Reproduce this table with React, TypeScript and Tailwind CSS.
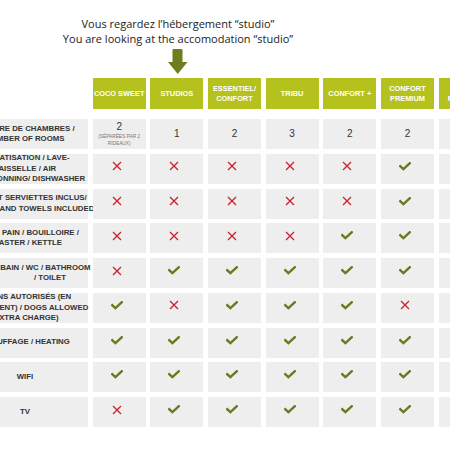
import React from "react";

const Check = () => (
  <svg width="12" height="9" viewBox="0 0 12 9" fill="none">
    <path d="M1.2 4.2 L4.4 7.2 L10.8 1.2" stroke="#6b7a21" strokeWidth="2.4" strokeLinecap="square" />
  </svg>
);

const Cross = () => (
  <svg width="10" height="10" viewBox="0 0 10 10" fill="none">
    <path d="M1 1 L9 9 M9 1 L1 9" stroke="#c8232c" strokeWidth="1.3" />
  </svg>
);

const headers: string[][] = [
  ["COCO SWEET"],
  ["STUDIOS"],
  ["ESSENTIEL/", "CONFORT"],
  ["TRIBU"],
  ["CONFORT +"],
  ["CONFORT", "PREMIUM"],
  ["SUITE", "PREMIUM"],
];

type Row = { label: string[]; cells: (string | boolean)[] };

const rows: Row[] = [
  { label: ["NOMBRE DE CHAMBRES /", "NUMBER OF ROOMS"], cells: ["2*", "1", "2", "3", "2", "2", "2"] },
  { label: ["CLIMATISATION / LAVE-", "VAISSELLE / AIR", "CONDITIONNING/ DISHWASHER"], cells: [false, false, false, false, false, true, true] },
  { label: ["DRAPS ET SERVIETTES INCLUS/", "BED LINEN AND TOWELS INCLUDED"], cells: [false, false, false, false, false, true, true] },
  { label: ["GRILLE PAIN / BOUILLOIRE /", "TOASTER / KETTLE"], cells: [false, false, false, false, true, true, true] },
  { label: ["SALLE DE BAIN / WC / BATHROOM", "__/ TOILET"], cells: [false, true, true, true, true, true, true] },
  { label: ["CHIENS AUTORISÉS (EN", "SUPPLÉMENT) / DOGS ALLOWED", "(EXTRA CHARGE)"], cells: [true, false, true, true, true, false, true] },
  { label: ["CHAUFFAGE / HEATING"], cells: [true, true, true, true, true, true, true] },
  { label: ["WIFI"], cells: [true, true, true, true, true, true, true] },
  { label: ["TV"], cells: [false, true, true, true, true, true, true] },
];

function Cell({ v }: { v: string | boolean }) {
  if (v === "2*") {
    return (
      <div className="h-[30px] bg-[#eeeeee] flex flex-col items-center justify-center pb-[1px]">
        <span className="text-[10px] leading-[11px] text-[#333]">2</span>
        <span className="text-[4.8px] leading-[8px] text-[#777] mt-[1px]">(SÉPARÉES PAR 2</span>
        <span className="text-[4.8px] leading-[6px] text-[#777]">RIDEAUX)</span>
      </div>
    );
  }
  if (typeof v === "string") {
    return (
      <div className="h-[30px] bg-[#eeeeee] flex items-center justify-center pb-[2px]">
        <span className="text-[10px] leading-[11px] text-[#333]">{v}</span>
      </div>
    );
  }
  return (
    <div className="h-[30px] bg-[#eeeeee] flex items-center justify-center pb-[5px] pr-[5px]">
      {v ? <Check /> : <Cross />}
    </div>
  );
}

export default function App() {
  return (
    <div
      className="w-[450px] h-[450px] overflow-hidden bg-white"
      style={{ fontFamily: '"Liberation Sans", Arial, sans-serif' }}
    >
      <div
        className="w-[356px] pt-[16px] text-center text-[11px] leading-[15px] text-[#222]"
        style={{ fontFamily: '"Open Sans", sans-serif' }}
      >
        <div>Vous regardez l’hébergement “studio”</div>
        <div>You are looking at the accomodation “studio”</div>
      </div>
      <div className="w-[356px] flex justify-center mt-[3px]">
        <svg width="20" height="25" viewBox="0 0 20 25">
          <rect x="4.5" y="0" width="10" height="13.5" rx="1" fill="#6f7d1c" />
          <polygon points="0,13 19.5,13 9.75,25" fill="#6f7d1c" />
        </svg>
      </div>
      <div className="ml-[-38px] mt-[4px] grid grid-cols-[126px_repeat(7,53px)] gap-x-[4.67px]">
        <div />
        {headers.map((h, i) => (
          <div
            key={i}
            className="h-[31px] bg-[#b5c21e] flex flex-col items-center justify-center text-white font-bold text-[7.4px] leading-[10px] text-center"
          >
            {h.map((l, j) => (
              <span key={j}>{l}</span>
            ))}
          </div>
        ))}
      </div>
      <div className="ml-[-38px] mt-[10px] grid grid-cols-[126px_repeat(7,53px)] gap-x-[4.67px] gap-y-[4.75px]">
        {rows.map((r, i) => (
          <React.Fragment key={i}>
            <div className="h-[30px] bg-[#eeeeee] flex flex-col items-center justify-center text-center font-bold text-[7.8px] leading-[10.5px] text-[#333] whitespace-nowrap">
              {r.label.map((l, j) =>
                l.startsWith("__") ? (
                  <span key={j} className="pl-[50px]">{l.slice(2)}</span>
                ) : (
                  <span key={j}>{l}</span>
                )
              )}
            </div>
            {r.cells.map((c, j) => (
              <Cell key={j} v={c} />
            ))}
          </React.Fragment>
        ))}
      </div>
    </div>
  );
}
